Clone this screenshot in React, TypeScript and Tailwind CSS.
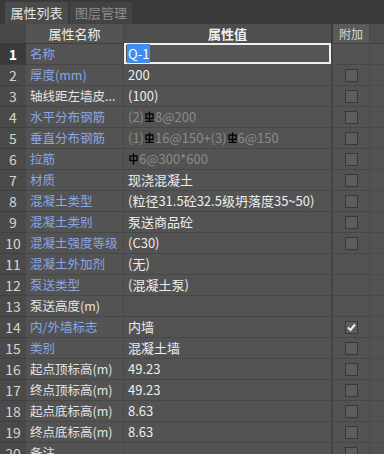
import React from 'react';

type Row = {
  name: string;
  value?: React.ReactNode;
  blue?: boolean;
  box?: 'none' | 'empty' | 'checked';
  dim?: boolean;
};

// rebar grade symbol (drawn, it is a special font glyph in the original)
const Rebar = ({ grade = 3 }: { grade?: number }) => (
  <svg width="9" height="12" viewBox="0 0 9 12" className="inline-block mx-[1px] -mt-[3px]">
    <rect x="1" y="3" width="7" height="4.5" fill="none" stroke="#000" strokeWidth="1.3" />
    <line x1="4.5" y1="0.5" x2="4.5" y2={grade === 3 ? 10 : 11.5} stroke="#000" strokeWidth="1.3" />
    {grade === 3 && <line x1="0.5" y1="10.3" x2="8.5" y2="10.3" stroke="#000" strokeWidth="1.3" />}
  </svg>
);

const rows: Row[] = [
  { name: '名称', blue: true, box: 'none' },
  { name: '厚度(mm)', value: '200', blue: true },
  { name: '轴线距左墙皮...', value: '(100)' },
  { name: '水平分布钢筋', value: <>(2)<Rebar />8@200</>, blue: true, dim: true },
  { name: '垂直分布钢筋', value: <>(1)<Rebar />16@150+(3)<Rebar />6@150</>, blue: true, dim: true },
  { name: '拉筋', value: <><Rebar grade={1} />6@300*600</>, blue: true, dim: true },
  { name: '材质', value: '现浇混凝土', blue: true },
  { name: '混凝土类型', value: '(粒径31.5砼32.5级坍落度35~50)', blue: true },
  { name: '混凝土类别', value: '泵送商品砼', blue: true },
  { name: '混凝土强度等级', value: '(C30)', blue: true },
  { name: '混凝土外加剂', value: '(无)', blue: true, box: 'none' },
  { name: '泵送类型', value: '(混凝土泵)', blue: true, box: 'none' },
  { name: '泵送高度(m)', box: 'none' },
  { name: '内/外墙标志', value: '内墙', blue: true, box: 'checked' },
  { name: '类别', value: '混凝土墙', blue: true },
  { name: '起点顶标高(m)', value: '49.23' },
  { name: '终点顶标高(m)', value: '49.23' },
  { name: '起点底标高(m)', value: '8.63' },
  { name: '终点底标高(m)', value: '8.63' },
  { name: '备注' },
];

const CheckBox = ({ checked }: { checked?: boolean }) => (
  <div className="w-[13px] h-[13px] border border-[#383838] bg-[#5d5d5d] flex items-center justify-center">
    {checked && (
      <svg width="11" height="11" viewBox="0 0 11 11">
        <path d="M2 5.5 L4.5 8 L9 2.5" fill="none" stroke="#f2f2f2" strokeWidth="2" />
      </svg>
    )}
  </div>
);

export default function App() {
  return (
    <div
      className="w-[384px] h-[454px] overflow-hidden bg-[#535353] text-[13px] select-none"
      style={{ fontFamily: '"Noto Sans CJK SC", "Liberation Sans", sans-serif' }}
    >
      {/* tabs */}
      <div className="h-[24px] bg-[#3a3a3a] flex items-end pl-[5px] gap-[2px]">
        <div className="w-[63px] h-[22px] bg-[#4b4b4b] text-[#e6e6e6] text-[13px] leading-[22px] text-center">
          属性列表
        </div>
        <div className="w-[62px] h-[22px] bg-[#434343] text-[#8c8c8c] text-[13px] leading-[22px] text-center">
          图层管理
        </div>
      </div>

      {/* header */}
      <div className="flex h-[20px] leading-[19px] border-b border-[#3e3e3e]">
        <div className="w-[26px] bg-[#484848]" />
        <div className="w-[98px] bg-[#545454] text-[#ececec] text-[13px] text-center border-r border-[#474747]">
          属性名称
        </div>
        <div className="w-[207px] bg-[#4e4e4e] text-[#f2f2f2] text-[13px] font-bold text-center">属性值</div>
        <div className="w-[2px] bg-[#3c3c3c]" />
        <div className="w-[37px] bg-[#5a5a5a] text-[#d6d6d6] text-[12px] text-center border-r border-[#484848]">
          附加
        </div>
        <div className="flex-1 bg-[#4f4f4f]" />
      </div>

      {/* rows */}
      {rows.map((r, i) => {
        const first = i === 0;
        return (
          <div key={i} className="flex h-[21px] leading-[20px]">
            <div
              className={`w-[26px] shrink-0 text-center border-b border-[#3f3f3f] text-[14px] ${
                first ? 'bg-[#3a3a3a] text-white font-bold' : 'bg-[#4a4a4a] text-[#d4d4d4]'
              }`}
            >
              {i + 1}
            </div>
            <div
              className={`w-[98px] shrink-0 pl-[4px] text-[12.5px] whitespace-nowrap overflow-hidden border-b border-r border-[#474747] ${
                r.blue ? 'text-[#8aa6e6]' : 'text-[#e4e4e4]'
              }`}
            >
              {r.name}
            </div>
            {first ? (
              <div className="w-[207px] shrink-0 h-[21px] border-2 border-[#efefef] -mt-px pl-[1px] leading-[17px] bg-[#555]">
                <span className="bg-[#3c8ef0] text-white px-[1px]">Q-1</span>
              </div>
            ) : (
              <div
                className={`w-[207px] shrink-0 pl-[4px] whitespace-nowrap overflow-hidden border-b border-[#474747] ${
                  r.dim ? 'text-[#8a8a8a]' : 'text-[#ededed]'
                }`}
              >
                {r.value}
              </div>
            )}
            <div className="w-[2px] shrink-0 bg-[#444]" />
            <div className="w-[37px] shrink-0 flex items-center justify-center border-b border-r border-[#484848]">
              {r.box === 'none' ? null : <CheckBox checked={r.box === 'checked'} />}
            </div>
            <div className="flex-1 border-b border-[#4a4a4a] bg-[#525252]" />
          </div>
        );
      })}
    </div>
  );
}
